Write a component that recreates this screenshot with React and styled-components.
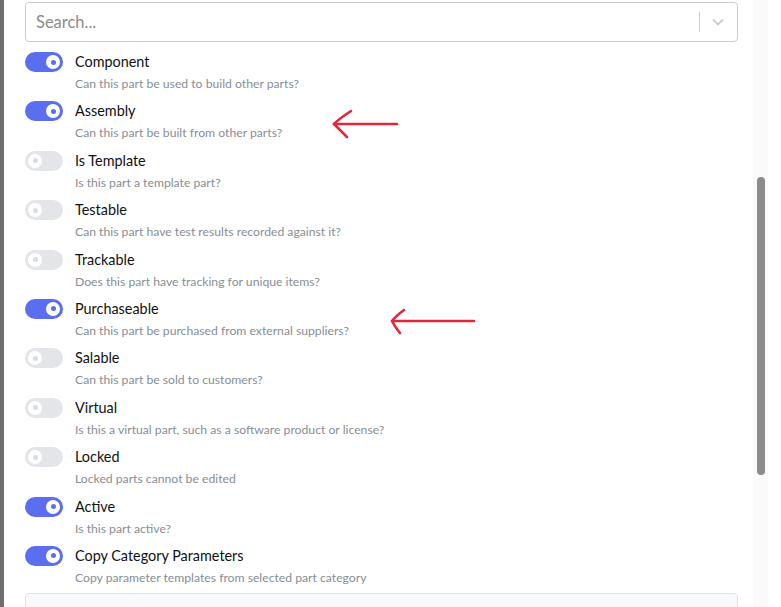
import React from 'react';
import styled, { createGlobalStyle } from 'styled-components';

const GlobalStyle = createGlobalStyle`
  html, body {
    margin: 0;
    padding: 0;
    background: #ffffff;
  }
  body {
    font-family: Lato, "Open Sans", sans-serif;
  }
`;

const options = [
  { label: 'Component', desc: 'Can this part be used to build other parts?', on: true },
  { label: 'Assembly', desc: 'Can this part be built from other parts?', on: true },
  { label: 'Is Template', desc: 'Is this part a template part?', on: false },
  { label: 'Testable', desc: 'Can this part have test results recorded against it?', on: false },
  { label: 'Trackable', desc: 'Does this part have tracking for unique items?', on: false },
  { label: 'Purchaseable', desc: 'Can this part be purchased from external suppliers?', on: true },
  { label: 'Salable', desc: 'Can this part be sold to customers?', on: false },
  { label: 'Virtual', desc: 'Is this a virtual part, such as a software product or license?', on: false },
  { label: 'Locked', desc: 'Locked parts cannot be edited', on: false },
  { label: 'Active', desc: 'Is this part active?', on: true },
  { label: 'Copy Category Parameters', desc: 'Copy parameter templates from selected part category', on: true },
];

const Page = () => {
  return (
    <>
      <GlobalStyle />
      <Frame>
        <Edge />
        <Content>
          <SearchBox>
            <Placeholder>Search...</Placeholder>
            <Indicators>
              <Separator />
              <svg width="12" height="8" viewBox="0 0 12 8">
                <path d="M1 1.5 L6 6.5 L11 1.5" fill="none" stroke="#cccccc" strokeWidth="1.8" />
              </svg>
            </Indicators>
          </SearchBox>
          <OptionList>
            {options.map((o) => (
              <OptionRow key={o.label}>
                <Track $on={o.on}>
                  <Thumb $on={o.on}>
                    <Dot $on={o.on} />
                  </Thumb>
                </Track>
                <TextWrapper>
                  <Label>{o.label}</Label>
                  <Description>{o.desc}</Description>
                </TextWrapper>
              </OptionRow>
            ))}
          </OptionList>
          <BottomPanel />
        </Content>
        <ScrollTrack>
          <ScrollThumb />
        </ScrollTrack>
        <RightGap />
        <Annotations width="781" height="607" viewBox="0 0 781 607">
          <path d="M397 124 L334 124" />
          <path d="M351 111 Q340 118 334 124 Q340 130 347 137" />
          <path d="M474 321 L392 321" />
          <path d="M404 310 Q396 316 392 321 Q395 327 400 333" />
        </Annotations>
      </Frame>
    </>
  );
};

const Frame = styled.div`
  position: relative;
  display: flex;
  width: 781px;
  height: 607px;
  overflow: hidden;
  background: #ffffff;
`;

const Edge = styled.div`
  width: 4px;
  flex-shrink: 0;
  background: #6e6e6e;
`;

const Content = styled.div`
  flex: 1;
  padding: 2px 15px 0 21px;
  display: flex;
  flex-direction: column;
`;

const SearchBox = styled.div`
  height: 38px;
  border: 1px solid #cccccc;
  border-radius: 4px;
  display: flex;
  align-items: center;
  justify-content: space-between;
  padding-left: 10px;
  flex-shrink: 0;
`;

const Placeholder = styled.span`
  font-size: 16.5px;
  color: #8c8c8c;
`;

const Indicators = styled.div`
  display: flex;
  align-items: center;
  gap: 12px;
  padding-right: 13px;
`;

const Separator = styled.span`
  width: 1px;
  height: 20px;
  background: #cccccc;
`;

const OptionList = styled.div`
  display: flex;
  flex-direction: column;
  gap: 8.4px;
  margin-top: 10px;
`;

const OptionRow = styled.div`
  display: flex;
  align-items: flex-start;
  gap: 12px;
`;

const Track = styled.div`
  width: 38px;
  height: 20px;
  border-radius: 10px;
  background: ${(p) => (p.$on ? '#5b6ef0' : '#e3e5e9')};
  display: flex;
  align-items: center;
  justify-content: ${(p) => (p.$on ? 'flex-end' : 'flex-start')};
  padding: 0 3px;
  box-sizing: border-box;
  flex-shrink: 0;
`;

const Thumb = styled.div`
  width: 14px;
  height: 14px;
  border-radius: 50%;
  background: #ffffff;
  display: flex;
  align-items: center;
  justify-content: center;
`;

const Dot = styled.div`
  width: 5px;
  height: 5px;
  border-radius: 50%;
  background: ${(p) => (p.$on ? '#5b6ef0' : '#d9dce1')};
`;

const TextWrapper = styled.div`
  display: flex;
  flex-direction: column;
  gap: 3px;
`;

const Label = styled.span`
  font-size: 14.4px;
  line-height: 20px;
  color: #111111;
`;

const Description = styled.span`
  font-size: 12.2px;
  line-height: 18px;
  color: #868e96;
`;

const BottomPanel = styled.div`
  margin-top: 6px;
  height: 40px;
  flex-shrink: 0;
  background: #f8f9fa;
  border: 1px solid #dee2e6;
  border-radius: 4px;
`;

const ScrollTrack = styled.div`
  width: 15px;
  flex-shrink: 0;
  background: #fafafa;
  display: flex;
  justify-content: center;
`;

const ScrollThumb = styled.div`
  width: 8px;
  height: 298px;
  margin-top: 177px;
  border-radius: 4px;
  background: #8b8b8b;
`;

const RightGap = styled.div`
  width: 13px;
  flex-shrink: 0;
`;

const Annotations = styled.svg`
  position: absolute;
  top: 0;
  left: 0;
  pointer-events: none;
  fill: none;
  stroke: #e3263b;
  stroke-width: 2.6;
  stroke-linecap: round;
  stroke-linejoin: round;
`;

export default Page;
